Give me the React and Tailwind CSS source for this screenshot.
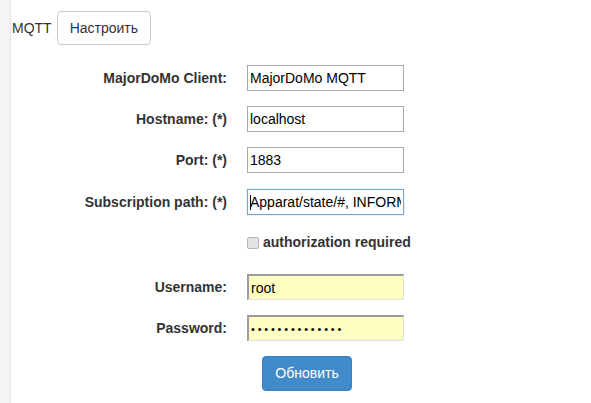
import React from 'react';

const font = { fontFamily: '"Liberation Sans", Arial, sans-serif' };

function Row({ label, children, className = '' }) {
    return (
        <div className={`flex items-center ${className}`}>
            <label className="w-[216px] pr-px text-right text-[14px] font-bold text-[#333]">{label}</label>
            <div className="ml-[19px]">{children}</div>
        </div>
    );
}

function Field({ value, type = 'text', variant = 'plain' }) {
    const styles = {
        plain: 'border border-[#a9a9a9] bg-white',
        focus: 'border border-[#78a3d6] bg-white shadow-[0_0_1px_#9cc0ea]',
        auto: 'border border-t-2 border-l-2 border-[#e0e0e0] border-t-[#9c9c9c] border-l-[#9c9c9c] bg-[#ffffc4]',
    };
    return (
        <div className="relative">
            <input
                type={type}
                value={value}
                readOnly
                className={`block w-[157px] h-[26px] px-[2px] text-black outline-none ${
                    type === 'password' ? 'tracking-[2.8px] text-[11px]' : 'text-[14px]'
                } ${styles[variant]}`}
                style={font}
            />
            {variant === 'focus' && (
                <span className="absolute left-[3px] top-[6px] h-[15px] w-px bg-black" />
            )}
        </div>
    );
}

export default function App() {
    return (
        <div className="flex h-[403px] w-[591px] bg-white text-[#333]" style={font}>
            {/* side strip */}
            <div className="w-[11px] shrink-0 bg-[#f4f4f4] border-r border-[#e6e6e6]" />

            <div className="flex-1 pl-px">
                {/* header */}
                <div className="mt-[11px] flex items-center">
                    <span className="text-[14px] text-[#333]">MQTT</span>
                    <button
                        type="button"
                        className="ml-[5px] h-[34px] px-[12px] rounded-[4px] border border-[#ccc] bg-white text-[14px] text-[#333]"
                    >
                        Настроить
                    </button>
                </div>

                {/* form */}
                <div className="mt-[20px] flex flex-col">
                    <Row label="MajorDoMo Client:">
                        <Field value="MajorDoMo MQTT" />
                    </Row>
                    <Row label="Hostname: (*)" className="mt-[15px]">
                        <Field value="localhost" />
                    </Row>
                    <Row label="Port: (*)" className="mt-[15px]">
                        <Field value="1883" />
                    </Row>
                    <Row label="Subscription path: (*)" className="mt-[16px]">
                        <Field value="Apparat/state/#, INFORMER/#" variant="focus" />
                    </Row>

                    <div className="mt-[17px] ml-[235px] flex items-center">
                        <span className="h-[12px] w-[12px] rounded-[2px] border border-[#b5b5b5] bg-[#e4e4e4]" />
                        <span className="ml-[4px] text-[14px] font-bold text-[#333]">authorization required</span>
                    </div>

                    <Row label="Username:" className="mt-[21px]">
                        <Field value="root" variant="auto" />
                    </Row>
                    <Row label="Password:" className="mt-[15px]">
                        <Field value="12345678901234" type="password" variant="auto" />
                    </Row>

                    <div className="mt-[15px] ml-[250px]">
                        <button
                            type="button"
                            className="h-[35px] w-[90px] rounded-[4px] border border-[#3a80c4] bg-[#428bca] text-[14px] text-white"
                        >
                            Обновить
                        </button>
                    </div>
                </div>
            </div>
        </div>
    );
}
